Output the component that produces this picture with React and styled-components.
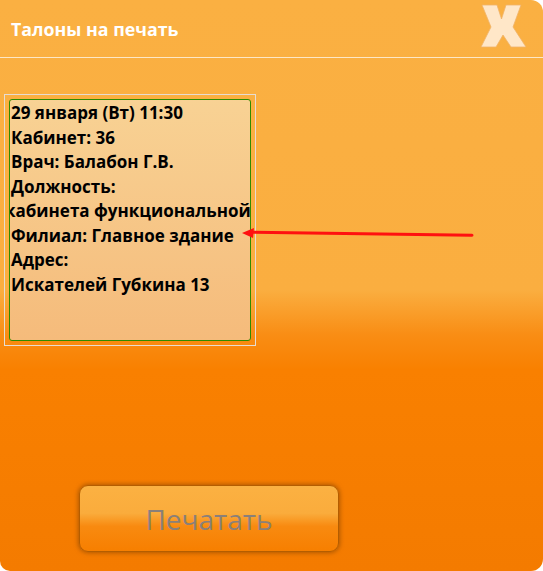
import React from 'react'
import styled, { createGlobalStyle } from 'styled-components'

const Global = createGlobalStyle`
  html, body { margin: 0; padding: 0; background: #ffffff; }
  body { font-family: "Open Sans", "Noto Sans", sans-serif; }
`

const Window = styled.div`
  position: relative;
  width: 543px;
  height: 571px;
  box-sizing: border-box;
  display: flex;
  flex-direction: column;
  border-radius: 0 12px 12px 10px;
  overflow: hidden;
  background: linear-gradient(
    to bottom,
    #fab042 0px,
    #faae40 290px,
    #f98d14 335px,
    #f98000 370px,
    #f47b00 571px
  );
`

const Header = styled.div`
  height: 57px;
  flex: none;
  display: flex;
  align-items: center;
  justify-content: space-between;
  padding: 0 0 0 11px;
  border-bottom: 1px solid #fde7c6;
`

const Title = styled.h1`
  margin: 0;
  font-size: 17.8px;
  font-weight: 700;
  color: #ffffff;
`

const CloseBtn = styled.button`
  border: none;
  background: none;
  padding: 0;
  margin: 0 16px 6px 0;
  width: 48px;
  height: 46px;
  cursor: pointer;
  svg { display: block; }
`

const Body = styled.div`
  flex: 1;
  display: flex;
  flex-direction: column;
  padding: 36px 0 19px 4px;
`

const TicketFrame = styled.div`
  width: 252px;
  height: 252px;
  box-sizing: border-box;
  border: 1px solid #e6dcd2;
  padding: 4px;
`

const Ticket = styled.div`
  height: 100%;
  box-sizing: border-box;
  border: 1px solid #2f8a00;
  border-radius: 3px;
  background: linear-gradient(to bottom, #f8d294, #f5bb7b);
  padding: 1px 0 0 1px;
  overflow: hidden;
`

const Line = styled.div`
  font-size: 17px;
  font-weight: 700;
  color: #000;
  line-height: 24.5px;
  white-space: nowrap;
  margin-left: ${p => (p.$shift ? `${p.$shift}px` : '0')};
`

const PrintButton = styled.button`
  margin-top: auto;
  margin-left: 75px;
  width: 260px;
  height: 67px;
  border-radius: 9px;
  border: 1px solid #b45d00;
  box-shadow: 0 0 4px 1px rgba(120, 60, 0, 0.55);
  background: linear-gradient(
    to bottom,
    #fbb142 0%,
    #faac3c 42%,
    #f88a10 62%,
    #f77f00 100%
  );
  font-family: "Open Sans", "Noto Sans", sans-serif;
  font-size: 28px;
  font-weight: 400;
  color: #8a8079;
  cursor: pointer;
`

const Arrow = styled.svg`
  position: absolute;
  left: 238px;
  top: 226px;
  overflow: visible;
  pointer-events: none;
`

const lines = [
  { text: '29 января (Вт) 11:30' },
  { text: 'Кабинет: 36' },
  { text: 'Врач: Балабон Г.В.' },
  { text: 'Должность:' },
  { text: 'кабинета функциональной', shift: -6 },
  { text: 'Филиал: Главное здание' },
  { text: 'Адрес:' },
  { text: 'Искателей Губкина 13' },
]

export default function App() {
  return (
    <Window>
      <Global />
      <Header>
        <Title>Талоны на печать</Title>
        <CloseBtn aria-label="Закрыть">
          <svg width="48" height="46" viewBox="0 0 48 46">
            <polygon
              points="3,2 18,2 22.5,16 27,2 42,2 34,24 47,44 32,44 24,32 17,44 2,44 12,24"
              fill="#ffe7c8"
              stroke="#f0b46a"
              strokeWidth="0.8"
              strokeLinejoin="round"
            />
          </svg>
        </CloseBtn>
      </Header>
      <Body>
        <TicketFrame>
          <Ticket>
            {lines.map((l, i) => (
              <Line key={i} $shift={l.shift}>{l.text}</Line>
            ))}
          </Ticket>
        </TicketFrame>
        <PrintButton>Печатать</PrintButton>
      </Body>
      <Arrow width="240" height="16">
        <path d="M14,6.2 L234,9.2" stroke="#ff1010" strokeWidth="3" fill="none" strokeLinecap="round" />
        <polygon points="4,7 16,2 15,12" fill="#ff1010" />
      </Arrow>
    </Window>
  )
}
